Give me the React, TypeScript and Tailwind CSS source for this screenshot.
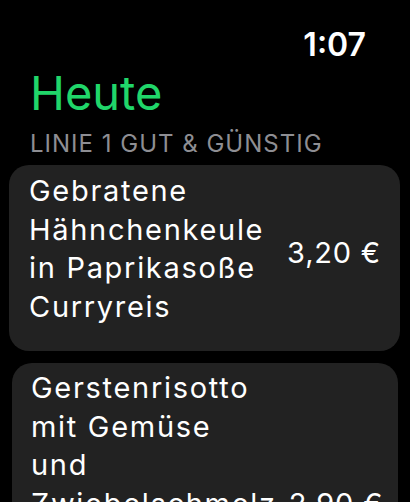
import React from "react";

type Item = { lines: string[]; price: string; card: string; priceCls: string };

const items: Item[] = [
  {
    lines: ["Gebratene", "Hähnchenkeule", "in Paprikasoße", "Curryreis"],
    price: "3,20 €",
    card: "ml-[9px] mr-[10px] pl-[20px] pr-[19px] pt-[7px] pb-[25px] items-center",
    priceCls: "mt-[9px]",
  },
  {
    lines: ["Gerstenrisotto", "mit Gemüse", "und", "Zwiebelschmelz"],
    price: "2,90 €",
    card: "ml-[12px] mr-[12px] pl-[19px] pr-[22px] pt-[6px] pb-[25px] items-end",
    priceCls: "",
  },
];

export default function App() {
  return (
    <div
      className="w-[410px] h-[502px] overflow-hidden bg-black text-white"
      style={{ fontFamily: "Inter, 'Noto Sans', sans-serif" }}
    >
      <div className="flex justify-end pr-[44px] pt-[26px] h-[64px]">
        <span className="text-[32px] leading-[38px] font-semibold">1:07</span>
      </div>
      <div className="mt-[1px] pl-[30px] text-[47px] leading-[56px] text-[#20d66a]">Heute</div>
      <div className="mt-[8px] pl-[30px] text-[24px] leading-[30px] text-[#8e8e93] tracking-[1px] whitespace-nowrap">
        LINIE 1 GUT &amp; GÜNSTIG
      </div>
      <div className="mt-[6px] flex flex-col gap-[12px]">
        {items.map((it) => (
          <div key={it.price} className={`flex justify-between gap-[12px] rounded-[20px] bg-[#222222] ${it.card}`}>
            <div className="flex flex-col text-[29px] leading-[38.5px] tracking-[1.7px]">
              {it.lines.map((l) => (
                <span key={l} className="whitespace-nowrap">
                  {l}
                </span>
              ))}
            </div>
            <div className={`shrink-0 whitespace-nowrap text-[29px] leading-[38.5px] tracking-[0.8px] ${it.priceCls}`}>
              {it.price}
            </div>
          </div>
        ))}
      </div>
    </div>
  );
}
